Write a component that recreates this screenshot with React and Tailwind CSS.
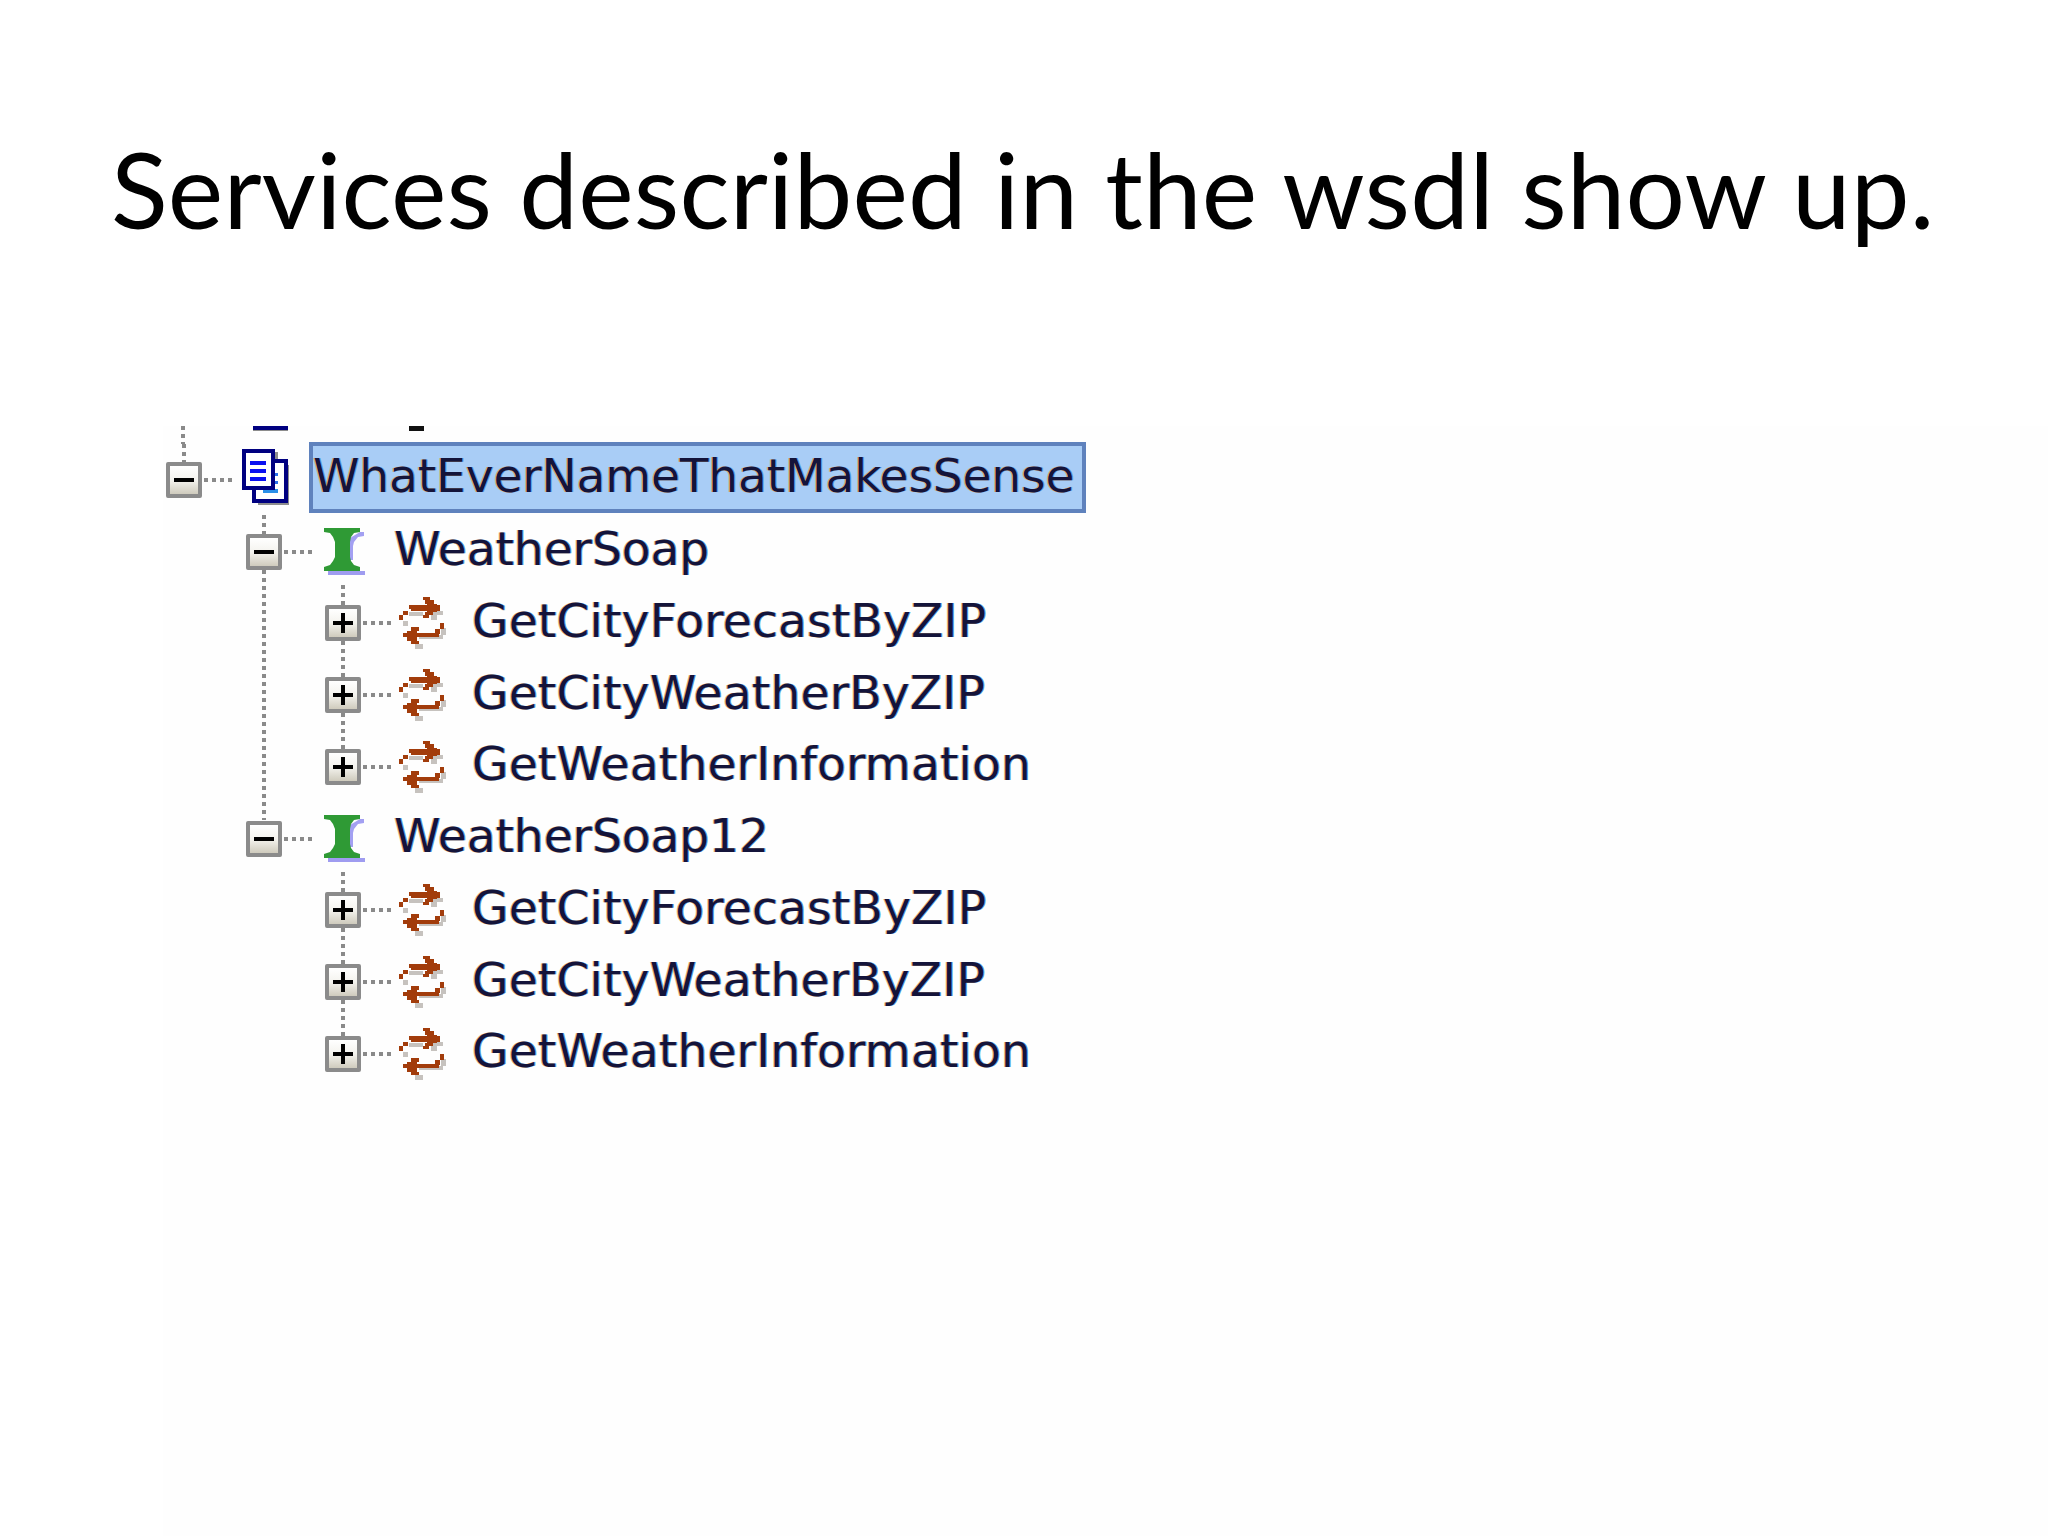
const V_DOTS = "bg-[repeating-linear-gradient(to_bottom,#8a8a8a_0,#8a8a8a_4px,transparent_4px,transparent_8px)]";
const H_DOTS = "bg-[repeating-linear-gradient(to_right,#8a8a8a_0,#8a8a8a_4px,transparent_4px,transparent_8px)]";

function Expander({ open, up, down }) {
  return (
    <div className="relative w-9 h-9 shrink-0">
      {up && <div className={`absolute left-4 bottom-full w-1 ${up} ${V_DOTS}`} />}
      {down && <div className={`absolute left-4 top-full w-1 ${down} ${V_DOTS}`} />}
      <div className="w-9 h-9 border-4 border-[#8b8b8b] bg-gradient-to-b from-white via-[#f4f3ee] to-[#cfcbbd] rounded-[2px] flex items-center justify-center">
        <svg width="20" height="20" viewBox="0 0 20 20" shapeRendering="crispEdges">
          <rect x="0" y="8" width="20" height="4" fill="#000" />
          {!open && <rect x="8" y="0" width="4" height="20" fill="#000" />}
        </svg>
      </div>
    </div>
  );
}

function Connector({ className }) {
  return <div className={`h-1 shrink-0 ${H_DOTS} ${className}`} />;
}

function DocIcon() {
  return (
    <svg width="47" height="56" viewBox="0 0 47 56" shapeRendering="crispEdges" className="shrink-0">
      <rect x="16" y="48" width="31" height="8" fill="#8d8d8d" />
      <rect x="43" y="16" width="4" height="40" fill="#8d8d8d" />
      <rect x="32" y="3" width="4" height="10" fill="#8d8d8d" />
      <rect x="12" y="12" width="32" height="40" fill="#fff" stroke="#000080" strokeWidth="4" />
      <rect x="25" y="24" width="11" height="3" fill="#2a6fe8" />
      <rect x="25" y="32" width="11" height="3" fill="#2a6fe8" />
      <rect x="21" y="40" width="15" height="4" fill="#2a8fe8" />
      <rect x="2" y="2" width="29" height="37" fill="#fff" stroke="#000080" strokeWidth="4" />
      <rect x="8" y="12" width="16" height="4" fill="#0a10f0" />
      <rect x="8" y="20" width="16" height="4" fill="#0a10f0" />
      <rect x="8" y="28" width="16" height="4" fill="#0a10f0" />
    </svg>
  );
}

function BeamIcon() {
  return (
    <svg width="41" height="48" viewBox="0 0 41 48" className="shrink-0">
      <rect x="4" y="43" width="37" height="4" fill="#9f9cf0" />
      <polygon points="36,4 40,4 40,8 34,9 30,14 29,18 29,32 26,32 26,10" fill="#a3a0f2" />
      <polygon
        points="0,0 36,0 36,4 30,5 27,9 26,14 26,29 27,33 30,37 36,39 36,43 0,43 0,39 6,37 9,33 11,29 11,14 9,9 6,5 0,4"
        fill="#2f9a35"
      />
    </svg>
  );
}

function SwapIcon() {
  return (
    <svg width="48" height="52" viewBox="0 0 48 52" shapeRendering="crispEdges" className="shrink-0">
      <g fill="#c6c2be">
        <rect x="10" y="15" width="14" height="4" />
        <rect x="32" y="14" width="12" height="4" />
        <rect x="32" y="18" width="6" height="5" />
        <rect x="4" y="24" width="5" height="5" />
        <rect x="20" y="38" width="24" height="4" />
        <rect x="16" y="47" width="8" height="5" />
        <rect x="42" y="31" width="5" height="7" />
      </g>
      <g fill="#a23c0b">
        <rect x="24" y="0" width="7" height="3" />
        <rect x="26" y="3" width="9" height="4" />
        <rect x="10" y="8" width="30" height="4" />
        <rect x="28" y="7" width="10" height="8" />
        <rect x="36" y="8" width="5" height="6" />
        <rect x="12" y="12" width="16" height="2" />
        <rect x="26" y="15" width="8" height="3" />
        <rect x="24" y="18" width="6" height="3" />
        <rect x="4" y="14" width="5" height="4" />
        <rect x="0" y="18" width="4" height="5" />
        <rect x="12" y="30" width="8" height="4" />
        <rect x="8" y="34" width="10" height="3" />
        <rect x="4" y="36" width="36" height="4" />
        <rect x="8" y="40" width="10" height="4" />
        <rect x="12" y="44" width="8" height="3" />
        <rect x="36" y="32" width="5" height="5" />
        <rect x="41" y="26" width="4" height="6" />
      </g>
    </svg>
  );
}

const label = "font-['DejaVu_Sans',sans-serif] text-[47px] leading-none text-[#14143a] whitespace-nowrap [text-shadow:-1px_0_0_#e6b27a,1px_0_0_#5a9fe0]";
const row = "flex items-center h-[71.75px]";

function Operation({ name, up, down }) {
  return (
    <div className={`${row} pl-[162px]`}>
      <Expander up={up} down={down} />
      <Connector className="w-[30px] ml-0.5" />
      <div className="ml-1.5"><SwapIcon /></div>
      <span className={`${label} ml-[25px] -mt-1.5 tracking-[0.25px]`}>{name}</span>
    </div>
  );
}

function Port({ name, up, down }) {
  return (
    <div className={`${row} pl-[83px]`}>
      <Expander open up={up} down={down} />
      <Connector className="w-[30px] ml-0.5" />
      <div className="ml-[10px]"><BeamIcon /></div>
      <span className={`${label} ml-[29px] -mt-1.5`}>{name}</span>
    </div>
  );
}

export default function App() {
  return (
    <div className="w-[2048px] h-[1536px] bg-white flex flex-col overflow-hidden">
      <h1 className="font-['Lato',sans-serif] font-normal text-[105px] leading-none tracking-[0.17px] text-black pl-[111px] pt-[136px] h-[426px] whitespace-nowrap">
        Services described in the wsdl show up.
      </h1>
      <div className="flex-1 ml-[163px] bg-[#fefefe]">
        {/* clipped row above the visible tree */}
        <div className="flex h-[18px] overflow-hidden">
          <div className={`ml-[18px] w-1 h-[18px] ${V_DOTS}`} />
          <div className="ml-[68px] w-[35px] h-[5px] bg-[#000080] border-b border-[#8d8d8d]" />
          <div className="ml-[121px] w-[15px] h-[5px] bg-[#111]" />
        </div>
        <div className={`${row} pl-[3px]`}>
          <Expander open up="h-[18px]" />
          <Connector className="w-[30px] ml-0.5" />
          <div className="ml-2 -mt-1.5"><DocIcon /></div>
          <div className={`${label} ml-5 w-[777px] h-[71px] border-4 border-[#5f82bd] bg-[#a9cdf6] flex items-center -mt-1 pb-1 tracking-[-0.1px]`}>
            WhatEverNameThatMakesSense
          </div>
        </div>
        <Port name="WeatherSoap" up="h-[19px]" down="h-[250px]" />
        <Operation name="GetCityForecastByZIP" up="h-5" down="h-9" />
        <Operation name="GetCityWeatherByZIP" down="h-9" />
        <Operation name="GetWeatherInformation" />
        <Port name="WeatherSoap12" />
        <Operation name="GetCityForecastByZIP" up="h-5" down="h-9" />
        <Operation name="GetCityWeatherByZIP" down="h-9" />
        <Operation name="GetWeatherInformation" />
      </div>
    </div>
  );
}
